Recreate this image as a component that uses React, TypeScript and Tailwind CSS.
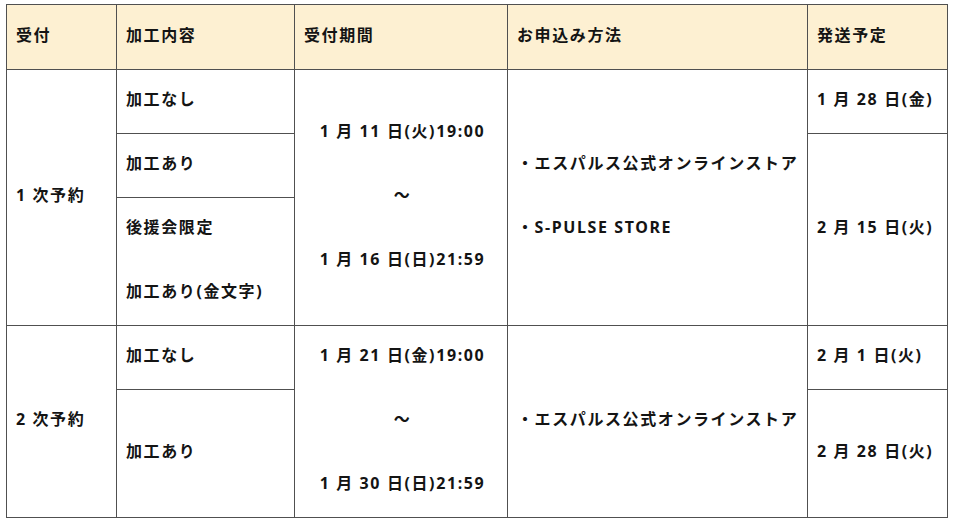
const font = { fontFamily: '"Noto Sans", "Noto Sans CJK JP", sans-serif' }

const cell = "border border-[#505050] pl-[9px] pr-[6px] pt-0 pb-[5px] align-middle"

export default function App() {
  return (
    <div className="min-h-[525px] bg-white pl-[6px] pt-[4px] text-[16px] font-bold tracking-[0.1em] text-[#141414]" style={font}>
      <table className="w-[941px] table-fixed border-collapse">
        <colgroup>
          <col className="w-[110px]" />
          <col className="w-[178px]" />
          <col className="w-[213px]" />
          <col className="w-[300px]" />
          <col className="w-[140px]" />
        </colgroup>
        <thead>
          <tr className="h-[65px] bg-[#fdf0d2] text-left">
            <th className={cell}>受付</th>
            <th className={cell}>加工内容</th>
            <th className={cell}>受付期間</th>
            <th className={cell}>お申込み方法</th>
            <th className={cell}>発送予定</th>
          </tr>
        </thead>
        <tbody>
          <tr className="h-[64px]">
            <td rowSpan={3} className={cell}>1 次予約</td>
            <td className={cell}>加工なし</td>
            <td rowSpan={3} className={`${cell} pl-[6px] text-center leading-[32px]`}>
              1 月 11 日(火)19:00
              <br />
              <br />〜
              <br />
              <br />1 月 16 日(日)21:59
            </td>
            <td rowSpan={3} className={`${cell} leading-[32px]`}>
              ・エスパルス公式オンラインストア
              <br />
              <br />・S-PULSE STORE
            </td>
            <td className={cell}>1 月 28 日(金)</td>
          </tr>
          <tr className="h-[64px]">
            <td className={cell}>加工あり</td>
            <td rowSpan={2} className={cell}>2 月 15 日(火)</td>
          </tr>
          <tr className="h-[128px]">
            <td className={`${cell} leading-[32px]`}>
              後援会限定
              <br />
              <br />加工あり(金文字)
            </td>
          </tr>
          <tr className="h-[64px]">
            <td rowSpan={2} className={cell}>2 次予約</td>
            <td className={cell}>加工なし</td>
            <td rowSpan={2} className={`${cell} pl-[6px] text-center leading-[32px]`}>
              1 月 21 日(金)19:00
              <br />
              <br />〜
              <br />
              <br />1 月 30 日(日)21:59
            </td>
            <td rowSpan={2} className={cell}>・エスパルス公式オンラインストア</td>
            <td className={cell}>2 月 1 日(火)</td>
          </tr>
          <tr className="h-[128px]">
            <td className={cell}>加工あり</td>
            <td className={cell}>2 月 28 日(火)</td>
          </tr>
        </tbody>
      </table>
    </div>
  )
}
